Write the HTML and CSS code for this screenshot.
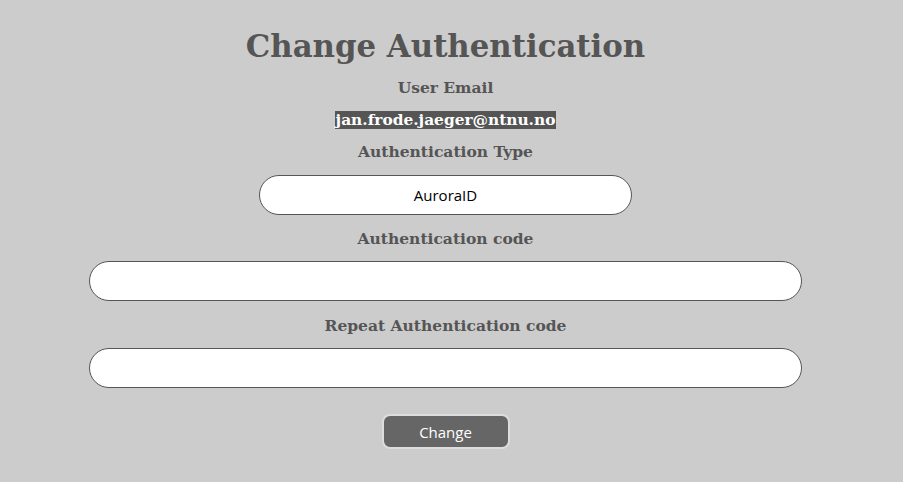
FILE: index.html
```html
<!DOCTYPE html>
<html>
<head>
<meta charset="utf-8">
<link rel="stylesheet" href="styles.css">
</head>
<body>
<div class="page">
  <h1 class="title">Change Authentication</h1>
  <div class="label label-first">User Email</div>
  <div class="email-row"><span class="email">jan.frode.jaeger@ntnu.no</span></div>
  <div class="label label-type">Authentication Type</div>
  <input class="field field-short" type="text" value="AuroraID">
  <div class="label">Authentication code</div>
  <input class="field field-long" type="password">
  <div class="label label-repeat">Repeat Authentication code</div>
  <input class="field field-long" type="password">
  <button class="btn">Change</button>
</div>
</body>
</html>
```
FILE: styles.css
```css
html, body {
  margin: 0;
  padding: 0;
  background: #cccccc;
}
body {
  font-family: "DejaVu Serif", serif;
  color: #555555;
}
.page {
  display: flex;
  flex-direction: column;
  align-items: center;
  padding-top: 28px;
  padding-right: 12px;
}
.title {
  margin: 0;
  font-size: 30.8px;
  line-height: 37px;
  font-weight: bold;
  color: #555555;
}
.label {
  font-size: 15.5px;
  font-weight: bold;
  line-height: 20px;
  margin-top: 14px;
}
.label-first { margin-top: 13px; }
.label-type { margin-top: 12px; }
.label-repeat { margin-top: 15px; }
.email-row {
  margin-top: 13px;
  font-size: 15.4px;
  font-weight: bold;
  line-height: 19px;
}
.email {
  background: #555555;
  color: #ffffff;
  padding: 0 1px;
}
.field {
  box-sizing: border-box;
  height: 40px;
  border: 1px solid #555555;
  border-radius: 20px;
  background: #ffffff;
  font-family: "Open Sans", "DejaVu Sans", sans-serif;
  font-size: 15px;
  text-align: center;
  color: #000;
  margin-top: 12px;
  outline: none;
}
.field-short { width: 373px; margin-top: 13px; }
.field-long { width: 713px; }
.btn {
  box-sizing: border-box;
  margin-top: 26px;
  width: 128px;
  height: 35px;
  background: #666666;
  color: #ffffff;
  border: 2px solid #dddddd;
  border-radius: 8px;
  font-family: "Open Sans", "DejaVu Sans", sans-serif;
  font-size: 15px;
}
```
